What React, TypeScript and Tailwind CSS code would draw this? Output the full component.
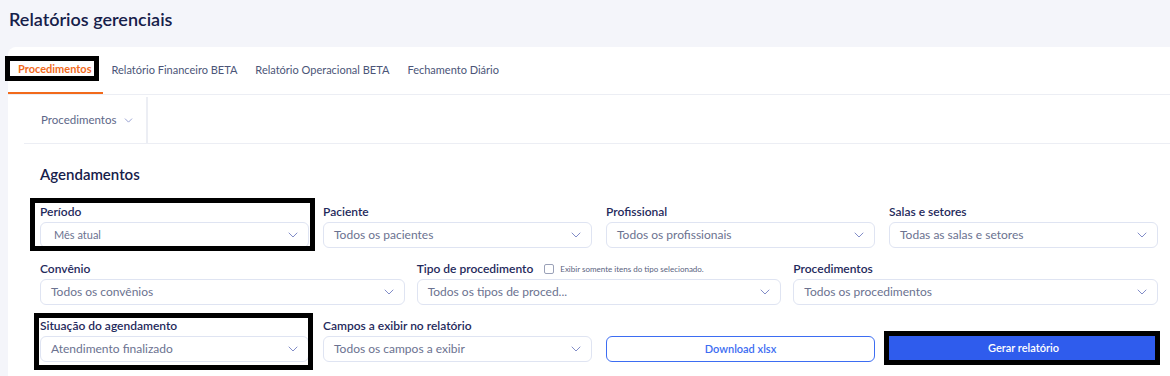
import { ChevronDown } from 'lucide-react'

type FieldProps = {
  label: string
  value: string
  small?: boolean
  extra?: React.ReactNode
}

function Field({ label, value, small, extra }: FieldProps) {
  return (
    <div className="flex flex-col">
      <div className="flex h-[16px] items-center gap-[11px]">
        <span className="text-[12px] font-semibold leading-[16px] text-[#1f2a5c]">{label}</span>
        {extra}
      </div>
      <div className="mt-[2px] flex h-[26px] items-center justify-between rounded-[6px] border border-[#dfe4f2] bg-white pr-[7px]">
        <span
          className={
            small
              ? 'pl-[13px] text-[11px] text-[#6b7290]'
              : 'pl-[10px] text-[12px] text-[#6b7290]'
          }
        >
          {value}
        </span>
        <ChevronDown size={16} strokeWidth={1.4} className="text-[#7884c4]" />
      </div>
    </div>
  )
}

function Mark({ className }: { className: string }) {
  // black annotation frame drawn on top of the screenshot
  return <div className={'pointer-events-none absolute border-black ' + className} />
}

export default function App() {
  return (
    <main className="h-[376px] w-[1170px] overflow-hidden bg-[#f4f5fa] font-['Lato',sans-serif]">
      <h1 className="flex h-[47px] items-start pl-[9px] pt-[6px] text-[18px] font-semibold text-[#16204a]">
        Relatórios gerenciais
      </h1>

      <div className="ml-[8px] h-[329px] rounded-tl-[8px] bg-white">
        {/* tabs */}
        <div className="flex h-[48px] border-b border-[#eceef4]">
          <div className="relative flex h-[47px] items-center border-b-2 border-[#f26a1b] pl-[10px] pr-[11px] text-[11px] font-bold text-[#f26a1b]">
            Procedimentos
            <Mark className="left-[-3px] top-[9px] h-[25px] w-[94px] border-[5px]" />
          </div>
          <div className="flex h-[47px] items-center px-[9px] text-[11px] text-[#4b5578]">Relatório Financeiro BETA</div>
          <div className="flex h-[47px] items-center px-[9px] text-[11px] text-[#4b5578]">Relatório Operacional BETA</div>
          <div className="flex h-[47px] items-center px-[9px] text-[11px] text-[#4b5578]">Fechamento Diário</div>
        </div>

        <div className="pl-[16px]">
          {/* sub tabs */}
          <div className="flex h-[49px] border-b border-[#eceef4]">
            <div className="mt-[2px] flex w-[124px] items-center gap-[6px] border-r-2 border-[#eceef4] pl-[17px] text-[11.5px] text-[#5d6788]">
              Procedimentos
              <ChevronDown size={13} strokeWidth={1.4} className="text-[#7884c4]" />
            </div>
          </div>

          <div className="pl-[16px] pr-[12px]">
            <h2 className="pt-[20px] text-[15px] font-semibold leading-[20px] text-[#16204a]">Agendamentos</h2>

            <div className="mt-[20px] grid grid-cols-4 gap-x-[14px]">
              <div className="relative">
                <Field label="Período" value="Mês atual" small />
                <Mark className="left-[-10px] top-[-6px] h-[53px] w-[285px] border-[5px]" />
              </div>
              <Field label="Paciente" value="Todos os pacientes" />
              <Field label="Profissional" value="Todos os profissionais" />
              <Field label="Salas e setores" value="Todas as salas e setores" />
            </div>

            <div className="mt-[13px] grid grid-cols-3 gap-x-[12px]">
              <Field label="Convênio" value="Todos os convênios" />
              <Field
                label="Tipo de procedimento"
                value="Todos os tipos de proced..."
                extra={
                  <span className="flex items-center gap-[6px]">
                    <span className="h-[10px] w-[10px] rounded-[2px] border border-[#9aa1b8] bg-white" />
                    <span className="text-[8px] text-[#5a6380]">Exibir somente itens do tipo selecionado.</span>
                  </span>
                }
              />
              <Field label="Procedimentos" value="Todos os procedimentos" />
            </div>

            <div className="mt-[13px] grid grid-cols-4 gap-x-[14px]">
              <div className="relative">
                <Field label="Situação do agendamento" value="Atendimento finalizado" />
                <Mark className="left-[-6px] top-[-5px] h-[57px] w-[279px] border-[5px]" />
              </div>
              <Field label="Campos a exibir no relatório" value="Todos os campos a exibir" />
              <div className="flex flex-col justify-end">
                <button className="flex h-[26px] items-center justify-center rounded-[6px] border-[1.5px] border-[#3d6df2] bg-white text-[11px] font-semibold text-[#3d6df2]">
                  Download xlsx
                </button>
              </div>
              <div className="flex flex-col justify-end">
                <div className="relative">
                  <button className="flex h-[24px] w-full items-center justify-center bg-[#2f5ced] text-[11px] font-semibold text-white">
                    Gerar relatório
                  </button>
                  <Mark className="left-[-5px] top-[-5px] h-[34px] w-[276px] border-[5px]" />
                </div>
                <div className="h-[2px]" />
              </div>
            </div>
          </div>
        </div>
      </div>
    </main>
  )
}
